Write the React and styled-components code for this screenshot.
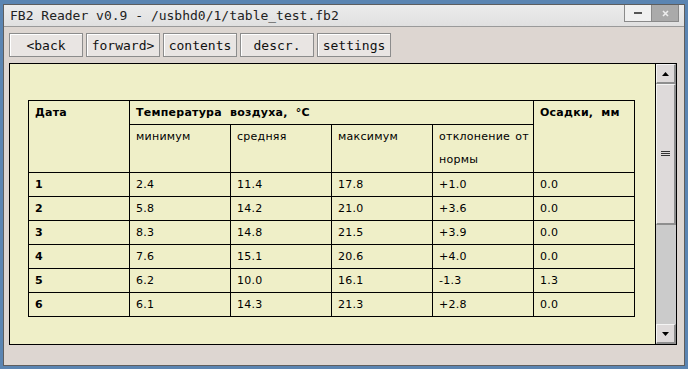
import React from 'react';
import styled, { createGlobalStyle } from 'styled-components';

const GlobalStyle = createGlobalStyle`
  html, body {
    margin: 0;
    padding: 0;
    background: #5b85b2;
  }
`;

const Desktop = styled.div`
  width: 688px;
  height: 369px;
  box-sizing: border-box;
  padding: 4px 3px 3px 3px;
  background: #5b85b2;
`;

const Window = styled.div`
  height: 100%;
  box-sizing: border-box;
  border: 1px solid #5e5e5e;
  background: #ddd6d1;
  display: flex;
  flex-direction: column;
`;

const TitleBar = styled.div`
  height: 21px;
  display: flex;
  align-items: center;
  justify-content: space-between;
  padding-left: 6px;
  background: linear-gradient(#ececec, #e0e0e0);
  border-bottom: 1px solid #9a9a9a;
  font-family: 'DejaVu Sans Mono', monospace;
  font-size: 13px;
  color: #222;
`;

const Controls = styled.div`
  display: flex;
  align-self: flex-start;
  margin-right: 5px;
`;

const CtlButton = styled.div`
  width: 26px;
  height: 16px;
  border: 1px solid #8a8a8a;
  border-top: none;
  background: ${p => (p.$close ? '#aaaaaa' : '#f0f0f0')};
  display: flex;
  align-items: center;
  justify-content: center;
  & + & {
    border-left: none;
  }
`;

const Toolbar = styled.div`
  display: flex;
  gap: 3px;
  padding: 6px 0 0 5px;
`;

const Button = styled.button`
  width: 74px;
  height: 24px;
  margin: 0;
  padding: 0;
  box-sizing: border-box;
  background: #e9e5e3;
  border: 1px solid #8c8c8c;
  box-shadow: inset 1px 1px 0 #ffffff;
  font-family: 'DejaVu Sans Mono', monospace;
  font-size: 13px;
  color: #111;
`;

const Frame = styled.div`
  margin: 6px 7px 20px 5px;
  flex: 1;
  display: flex;
  border: 1px solid #000;
  min-height: 0;
`;

const Page = styled.div`
  flex: 1;
  background: #efefc8;
  padding: 36px 0 0 18px;
`;

const Table = styled.table`
  border-collapse: collapse;
  table-layout: fixed;
  width: 607px;
  font-family: 'DejaVu Sans', Verdana, sans-serif;
  font-size: 11px;
  letter-spacing: 0.25px;
  color: #000;
`;

const Cell = styled.td`
  border: 1px solid #000;
  padding: 0 4px ${p => (p.$tall ? '1px' : '0')} 6px;
  line-height: 23px;
  vertical-align: top;
  text-align: justify;
  font-weight: ${p => (p.$bold ? 'bold' : 'normal')};
  word-spacing: ${p => (p.$bold ? '4px' : '0')};
`;

const Scrollbar = styled.div`
  width: 20px;
  border-left: 1px solid #000;
  display: flex;
  flex-direction: column;
  background: #cbcbcb;
`;

const Bevel = styled.div`
  box-sizing: border-box;
  height: ${p => p.$h}px;
  background: #dedada;
  border-top: 1px solid #f4f4f4;
  border-left: 1px solid #f4f4f4;
  border-right: 2px solid #8e8e8e;
  border-bottom: 2px solid #8e8e8e;
  display: flex;
  align-items: center;
  justify-content: center;
`;

const Track = styled.div`
  flex: 1;
`;

const cols = [101, 101, 101, 101, 101, 101];

const rows = [
  ['1', '2.4', '11.4', '17.8', '+1.0', '0.0'],
  ['2', '5.8', '14.2', '21.0', '+3.6', '0.0'],
  ['3', '8.3', '14.8', '21.5', '+3.9', '0.0'],
  ['4', '7.6', '15.1', '20.6', '+4.0', '0.0'],
  ['5', '6.2', '10.0', '16.1', '-1.3', '1.3'],
  ['6', '6.1', '14.3', '21.3', '+2.8', '0.0'],
];

const Arrow = ({ down }) => (
  <svg width="7" height="4" viewBox="0 0 7 4">
    <path d={down ? 'M0 0H7L3.5 4Z' : 'M0 4H7L3.5 0Z'} fill="#000" />
  </svg>
);

export default function App() {
  return (
    <Desktop>
      <GlobalStyle />
      <Window>
        <TitleBar>
          <span>FB2 Reader v0.9 - /usbhd0/1/table_test.fb2</span>
          <Controls>
            <CtlButton>
              <svg width="8" height="2"><rect width="8" height="2" fill="#555" /></svg>
            </CtlButton>
            <CtlButton $close>
              <svg width="7" height="7" viewBox="0 0 7 7">
                <path d="M1 1L6 6M6 1L1 6" stroke="#eee" strokeWidth="1.6" />
              </svg>
            </CtlButton>
          </Controls>
        </TitleBar>
        <Toolbar>
          <Button>&lt;back</Button>
          <Button>forward&gt;</Button>
          <Button>contents</Button>
          <Button>descr.</Button>
          <Button>settings</Button>
        </Toolbar>
        <Frame>
          <Page>
            <Table>
              <colgroup>
                {cols.map((w, i) => (
                  <col key={i} style={{ width: w }} />
                ))}
              </colgroup>
              <tbody>
                <tr>
                  <Cell $bold rowSpan={2}>Дата</Cell>
                  <Cell $bold colSpan={4}>Температура воздуха, °C</Cell>
                  <Cell $bold rowSpan={2}>Осадки, мм</Cell>
                </tr>
                <tr>
                  <Cell $tall>минимум</Cell>
                  <Cell $tall>средняя</Cell>
                  <Cell $tall>максимум</Cell>
                  <Cell $tall>отклонение от нормы</Cell>
                </tr>
                {rows.map(r => (
                  <tr key={r[0]}>
                    {r.map((v, i) => (
                      <Cell key={i} $bold={i === 0}>{v}</Cell>
                    ))}
                  </tr>
                ))}
              </tbody>
            </Table>
          </Page>
          <Scrollbar>
            <Bevel $h={20}><Arrow /></Bevel>
            <Bevel $h={141}>
              <svg width="9" height="6">
                <path d="M0 0.5H9M0 2.5H9M0 4.5H9" stroke="#333" strokeWidth="1" />
              </svg>
            </Bevel>
            <Track />
            <Bevel $h={20}><Arrow down /></Bevel>
          </Scrollbar>
        </Frame>
      </Window>
    </Desktop>
  );
}
